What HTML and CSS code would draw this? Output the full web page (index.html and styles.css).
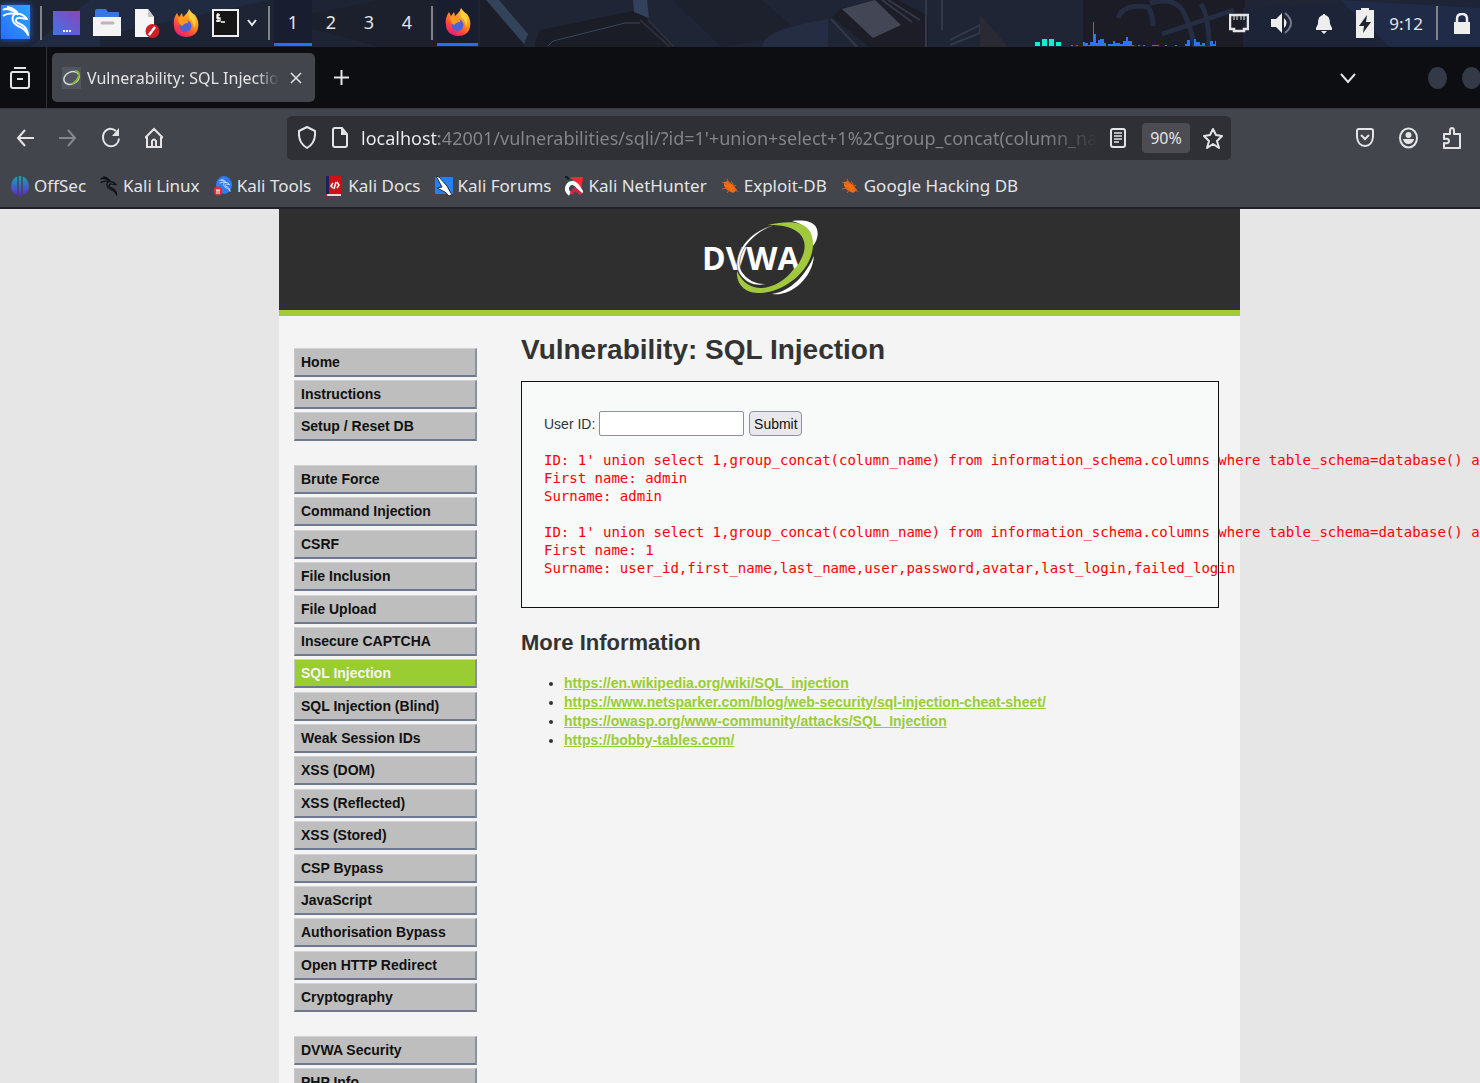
FILE: index.html
```html
<!DOCTYPE html>
<html lang="en">
<head>
<meta charset="utf-8">
<title>Vulnerability: SQL Injection</title>
<link rel="stylesheet" href="styles.css">
</head>
<body>
<svg class="defs" aria-hidden="true">
  <defs>
    <linearGradient id="flame" x1="0.8" y1="0" x2="0.2" y2="1"><stop offset="0" stop-color="#ffe14d"/><stop offset="0.45" stop-color="#ff8a1f"/><stop offset="0.75" stop-color="#ff3d45"/><stop offset="1" stop-color="#e3158a"/></linearGradient>
    <linearGradient id="violet" x1="0" y1="1" x2="1" y2="0"><stop offset="0" stop-color="#3f74e8"/><stop offset="1" stop-color="#8a46b8"/></linearGradient>
    <linearGradient id="kaliblue" x1="0" y1="1" x2="1" y2="0"><stop offset="0" stop-color="#2a6cff"/><stop offset="1" stop-color="#28a8ff"/></linearGradient>
    <linearGradient id="offsec" x1="0" y1="0" x2="0" y2="1"><stop offset="0" stop-color="#16a6b4"/><stop offset="1" stop-color="#6326cf"/></linearGradient>
    <symbol id="dragon" viewBox="0 0 28 30"><path d="M1 4C5 1 9 4 13 6l3 3M1 10c4-3 8-3 12-2M5 1c5 0 8 3 11 6M13 8c5-1 9 1 12 5l-6-1c-5-1-7 3-3 5 5 2 9 4 10 12-2-5-5-7-10-9-6-3-7-9-3-12z" fill="none" stroke="currentColor" stroke-width="2" stroke-linejoin="round"/></symbol>
    <symbol id="firefox" viewBox="0 0 26 30"><path d="M16 1c2 3 4 5 6 6 3 4 4 8 3 13-1 6-6 9-12 9S1 25 1 18C0 12 2 8 4 5l2 4 3-4 1 4c2-2 5-4 6-8z" fill="url(#flame)"/><circle cx="12.500" cy="18" r="6" fill="#4a63d6"/><path d="M5 10c3-1 5-1 7 1 2 1 4 2 3 4-3 0-4 1-6 3-2-1-4-4-4-8z" fill="#ff9a1f"/><path d="M17 4c5 4 7 10 4 16 0-4-2-7-4-9-2-3-1-5 0-7z" fill="#ffd23c"/></symbol>
    <symbol id="bug" viewBox="0 0 18 18"><path d="M3 5l4-1 5 4 4 5-4 3-6-3-3-4z" fill="#f26a12"/><path d="M1 5l4 2M6 2l2 5M1 12l6-1M6 16l3-4M10 4l3 5M15 8l-3 2M17 15l-4-3" stroke="#d95b10"/></symbol>
    <symbol id="nic" viewBox="0 0 20 20"><path d="M1 2h18v14h-4v2H5v-2H1z" fill="none" stroke="currentColor" stroke-width="2.500"/><path d="M5 3v4M8 3v4M12 3v4M15 3v4" stroke="currentColor"/></symbol>
  </defs>
</svg>

<header class="panel">
  <svg class="wallpaper" viewBox="0 0 1480 47" preserveAspectRatio="none" aria-hidden="true">
    <path d="M0 0h480v47H0z" fill="#1e2434"/><path d="M100 36 270 0H90L30 47h70z" fill="#202b42"/><path d="M280 20 380 0h90v47H380z" fill="#1c202d"/>
    <path d="M480 0h12l32 35v12h-44z" fill="#1b1d28"/><path d="M486 0h13l29 34-4 10z" fill="#33445a"/><path d="m535 42 5-12 98-20 8 8 28 29H535z" fill="#1a1c26"/><path d="m548 46 5-5 72-18 15 0" fill="none" stroke="#354862"/><path d="M633 0h14l2 18-15-6z" fill="#33425c"/><path d="m640 20 30 27M648 20l26 27" stroke="#2c2f3b" stroke-width="2"/>
    <path d="M672 0h90l30 26-30 14-40 7z" fill="#1d212e"/><path d="M762 47c2-13 20-20 66-28v28z" fill="#252d43"/>
    <path d="m832 17 8-8 38-9h20l30 16v31h-58z" fill="#1c1d27"/><path d="m842 9 33-9 26 25-28 13z" fill="#434755"/><path d="m831 19 26 28M882 0l30 22M888 0l32 20M950 40l30-15v8l-30 12M926 47V0M942 0v30" fill="none" stroke="#323848" stroke-width="2"/>
    <path d="m980 14 28 33h-28z" fill="#2a2a34"/><path d="M1083 0h162v47h-162z" fill="#1b1c26"/><path d="M1118 18q5-15 30-11c4 6 5 14 5 19M1150 3c20-5 30 0 35 12 6 14 8 22 10 32h14c0-20-3-35-8-43M1162 34l72-24" fill="none" stroke="#242d42" stroke-width="5"/><path d="M1243 8 1480 0v47h-237z" fill="#1d2438"/><path d="m1340 0 140 8v39h-90z" fill="#202b47"/>
  </svg>
  <button class="kali" aria-label="Applications"><svg viewBox="0 0 31 39"><path d="M1 5h29v34H1z" fill="url(#kaliblue)"/><use href="#dragon" x="2" y="5" width="28" height="32"/></svg></button>
  <span class="rule"></span>
  <div class="launchers">
    <button aria-label="Show desktop"><svg width="27" height="30" viewBox="0 0 27 30"><path d="M0 3h27v24H0z" fill="url(#violet)"/><path d="M10 23h2m1 0h2m1 0h2" stroke="#fff" stroke-width="2"/></svg></button>
    <button aria-label="Files"><svg width="28" height="30" viewBox="0 0 28 30"><path d="M2 3q0-2 2-2h9l2 3h11v8H2z" fill="#3578e5"/><path d="M0 9h28v19H0z" fill="#f4f4f4"/><path d="M9 15h11" stroke="#b8b8b8" stroke-width="3" stroke-linecap="round"/></svg></button>
    <button aria-label="Text editor"><svg width="26" height="30" viewBox="0 0 26 30"><path d="M1 1h13l6 8v20H1z" fill="#f6f6f6"/><path d="m14 1 6 8h-6z" fill="#c8c8c8"/><circle cx="18.500" cy="23" r="7" fill="#cf2026"/><path d="m15 27 6-8" stroke="#fff" stroke-width="2.500"/></svg></button>
    <button aria-label="Firefox"><svg width="26" height="30"><use href="#firefox"/></svg></button>
    <button aria-label="Terminal"><svg width="27" height="30" viewBox="0 0 27 30"><path d="M1 2h25v26H1z" fill="#161616" stroke="#eee" stroke-width="2"/><path d="M8 7H5v3h3v3H4M6 5v9M9 14h4" fill="none" stroke="#fff" stroke-width="1.300"/></svg></button>
  </div>
  <button class="more" aria-label="More launchers"><svg width="12" height="10" viewBox="0 0 12 10"><path d="m2 2 4 5 4-5" fill="none" stroke="#eee" stroke-width="2"/></svg></button>
  <span class="rule"></span>
  <nav class="spaces" aria-label="Workspaces"><button class="on">1</button><button>2</button><button>3</button><button>4</button></nav>
  <span class="rule"></span>
  <button class="task" aria-label="Firefox window"><svg width="26" height="30"><use href="#firefox"/></svg></button>
  <svg class="graph" width="182" height="30" viewBox="0 0 182 30" aria-label="System load"><path d="M0 26h5v4H0zM7 23h5v7H7zM14 23h5v7h-5zM21 26h5v4h-5z" fill="#00f5d4"/><path d="M36 30v-1h2v1M41 30v-1h2v1M48 30v-4h2v1h3v2h2v-3h3V6h1v12h2v9h2v-3h2v-1h4v4h2v3zM73 30v-2h5v-3h2v2h5v1h3v-3h3v-4h2v4h4v4h2v1zM103 30v-1h2v1M108 30v-1h2v1M117 30v-1h7v1M130 30v-1h2v1M140 30v-1h2v1M150 30v-2h2v-4h3v6zM159 30v-7h2v3h4v3h2v-2h3v3zM175 30v-5h3v3h2v-3h1v5z" fill="#2876ff"/></svg>
  <div class="tray">
    <button aria-label="Network"><svg width="20" height="20"><use href="#nic"/></svg></button>
    <button aria-label="Volume"><svg width="22" height="22" viewBox="0 0 22 22"><path d="M0 7h5l6-6v20l-6-6H0z" fill="#eee"/><path d="M13 6q5 5 0 10z" fill="#eee"/><path d="M14 1q12 10 0 20" fill="none" stroke="#777b86" stroke-width="2"/></svg></button>
    <button aria-label="Notifications"><svg width="18" height="21" viewBox="0 0 18 21"><path d="M8 1h2v1c4 1 5 4 5 9l2 4v2H1v-2l2-4c0-5 1-8 5-9zM6 18h6l-3 3z" fill="#eee"/></svg></button>
    <button aria-label="Battery"><svg width="20" height="30" viewBox="0 0 20 30"><path d="M6 0h8v2h5v28H1V2h5z" fill="#eee"/><path d="m12 7-8 11h5l-1 7 8-11h-5z" fill="#20242f"/></svg></button>
    <time>9:12</time>
  </div>
  <span class="rule"></span>
  <button class="lock" aria-label="Lock screen"><svg width="16" height="21" viewBox="0 0 16 21"><path d="M3 10V6q0-5 5-5t5 5v4" fill="none" stroke="#eee" stroke-width="2.500"/><path d="M0 9h16v12H0z" fill="#eee"/></svg></button>
</header>

<div class="tabs">
  <button class="view" aria-label="Firefox View"><svg width="20" height="22" viewBox="0 0 20 22"><path d="M4 1h12M2 5h16M7 12h6" stroke="currentColor" stroke-width="2"/><rect x="1" y="5" width="18" height="16" rx="2" fill="none" stroke="currentColor" stroke-width="2"/></svg></button>
  <div class="tab">
    <svg width="19" height="22" viewBox="0 0 19 22" aria-hidden="true"><path d="M0 0h19v22H0z" fill="#505560"/><ellipse cx="9.500" cy="11" rx="8" ry="6" transform="rotate(-25 9.500 11)" fill="none" stroke="#d4d9d0" stroke-width="1.500"/><path d="M13 4c7 0 4 9-3 13" fill="none" stroke="#83b42c" stroke-width="2"/></svg>
    <span class="title">Vulnerability: SQL Injection</span>
    <button aria-label="Close tab"><svg width="12" height="12" viewBox="0 0 12 12"><path d="m1 1 10 10M11 1 1 11" stroke="currentColor" stroke-width="1.500"/></svg></button>
  </div>
  <button class="plus" aria-label="New tab"><svg width="15" height="17" viewBox="0 0 15 17"><path d="M7.500 1v15M0 8.500h15" stroke="currentColor" stroke-width="2"/></svg></button>
  <button class="all" aria-label="List all tabs"><svg width="16" height="12" viewBox="0 0 16 12"><path d="m1 2 7 8 7-8" fill="none" stroke="currentColor" stroke-width="2"/></svg></button>
  <button class="win" aria-label="Minimise"></button><button class="win" aria-label="Maximise"></button>
</div>

<div class="toolbar">
  <div class="history">
    <button aria-label="Back"><svg width="18" height="18" viewBox="0 0 18 18"><path d="M18 9H2M9 1 2 9l7 8" fill="none" stroke="currentColor" stroke-width="2"/></svg></button>
    <button class="off" aria-label="Forward"><svg width="18" height="18" viewBox="0 0 18 18"><path d="M0 9h16M9 1l7 8-7 8" fill="none" stroke="currentColor" stroke-width="2"/></svg></button>
    <button aria-label="Reload"><svg width="18" height="21" viewBox="0 0 18 21"><path d="M14 4C8-1 1 3 1 10.500c0 11 15 12 16 1" fill="none" stroke="currentColor" stroke-width="2"/><path d="M17 1v8h-7z" fill="currentColor"/></svg></button>
    <button aria-label="Home"><svg width="18" height="21" viewBox="0 0 18 21"><path d="m0 11 9-9 9 9M2 10v10h14V10M7 20v-6q2-3 4 0v6" fill="none" stroke="currentColor" stroke-width="2"/></svg></button>
  </div>
  <div class="address">
    <svg width="18" height="23" viewBox="0 0 18 23" aria-hidden="true"><path d="m9 1 8 4q1 12-8 17Q0 17 1 5z" fill="none" stroke="currentColor" stroke-width="2" stroke-linejoin="round"/></svg>
    <svg width="16" height="21" viewBox="0 0 16 21" aria-hidden="true"><path d="M3 1h7l5 6v11q0 2-2 2H3q-2 0-2-2V3q0-2 2-2z" fill="none" stroke="currentColor" stroke-width="2"/><path d="M9 1v7h6z" fill="currentColor"/></svg>
    <input aria-label="Address" type="text" value="localhost:42001/vulnerabilities/sqli/?id=1'+union+select+1%2Cgroup_concat(column_name)+from">
    <button aria-label="Reader view"><svg width="16" height="20" viewBox="0 0 16 20"><rect x="1" y="1" width="14" height="18" rx="2" fill="none" stroke="currentColor" stroke-width="2"/><path d="M4 5h8M4 8h8M4 11h8M4 14h5" stroke="currentColor" stroke-width="1.500"/></svg></button>
    <button class="zoom">90%</button>
    <button aria-label="Bookmark"><svg width="20" height="22" viewBox="0 0 20 22"><path d="m10 2 3 6 6 1-5 5 2 7-6-4-6 4 2-7-5-5 6-1z" fill="none" stroke="currentColor" stroke-width="2" stroke-linejoin="round"/></svg></button>
  </div>
  <div class="extras">
    <button aria-label="Pocket"><svg width="18" height="19" viewBox="0 0 18 19"><path d="M3 1h12q2 0 2 2v6q-1 9-8 9T1 9V3q0-2 2-2z" fill="none" stroke="currentColor" stroke-width="2"/><path d="m5 7 4 4 4-4" fill="none" stroke="currentColor" stroke-width="2"/></svg></button>
    <button aria-label="Account"><svg width="19" height="22" viewBox="0 0 19 22"><ellipse cx="9.500" cy="11" rx="8.500" ry="9.500" fill="none" stroke="currentColor" stroke-width="2"/><circle cx="9.500" cy="8" r="3" fill="currentColor"/><path d="M4 12h11q-1 5-5.500 5T4 12z" fill="currentColor"/></svg></button>
    <button aria-label="Extensions"><svg width="18" height="22" viewBox="0 0 18 22"><path d="M1 7h6V4q0-3 2-3t2 3v3h6v14H1v-5q5 1 5-2t-5-2z" fill="none" stroke="currentColor" stroke-width="2" stroke-linejoin="round"/></svg></button>
  </div>
</div>

<nav class="bookmarks" aria-label="Bookmarks">
  <a href="#"><svg viewBox="0 0 18 20"><ellipse cx="9" cy="10" rx="9" ry="10" fill="url(#offsec)"/><path d="M7 0v20M11 0v20" stroke="#42454c" stroke-width="1.500"/></svg>OffSec</a>
  <a href="#" class="black"><svg><use href="#dragon"/></svg>Kali Linux</a>
  <a href="#"><svg viewBox="0 0 18 20"><ellipse cx="10" cy="9" rx="8" ry="9" fill="#2d7df5"/><use href="#dragon" x="5" y="3" width="12" height="13"/><circle cx="4" cy="15" r="4.500" fill="#e52d38"/><path d="M2 14h4M3 14v4M5 14v4" stroke="#fff"/></svg>Kali Tools</a>
  <a href="#"><svg viewBox="0 0 18 20"><path d="M1 0h15v20H1z" fill="#ce1116"/><path d="M1 0h3v18H1z" fill="#172457"/><path d="M2 19h14" stroke="#ddd" stroke-width="2"/><path d="m8 7-2 3 2 2M12 6l2 3-2 3M11 6 9 13" fill="none" stroke="#fff" stroke-width="1.500"/></svg>Kali Docs</a>
  <a href="#"><svg viewBox="0 0 18 20"><path d="M0 1h18v17H0z" fill="#2380f6"/><path d="m1 0 3 1 8 9 5 9-3 1-4-4-8-4 5-1z" fill="#fff" stroke="#252a35"/></svg>Kali Forums</a>
  <a href="#"><svg viewBox="0 0 18 20"><path d="M5 1h13l-2 14z" fill="#f52835"/><path d="M5 18C-1 14 3 6 8 7s5 5 9 10" fill="none" stroke="#fff" stroke-width="4"/><path d="m6 18 4-5 6 5" fill="none" stroke="#d72343" stroke-width="3"/><path d="m0 0 4 3" stroke="#161616" stroke-width="2"/></svg>Kali NetHunter</a>
  <a href="#"><svg><use href="#bug"/></svg>Exploit-DB</a>
  <a href="#"><svg><use href="#bug"/></svg>Google Hacking DB</a>
</nav>

<div class="page">
  <div class="site">
    <header class="banner">
      <svg width="116" height="80" viewBox="0 0 116 80" role="img" aria-label="DVWA"><text x="0" y="52" class="logo">DVWA</text><path d="M73 7C50 14 31 38 40 54q8 12 24 12-14 4-24-7C26 43 43 13 73 7z" fill="#fff" stroke="#2f2f2f" stroke-width="0.500"/><path d="M90 3c33-4 27 18 21 25-2-15-9-22-21-25zM112 38c-2 24-25 41-42 38 20-3 34-20 42-38z" fill="#fff"/><path d="M66 7c31-7 45 0 45 19 0 28-32 50-55 49-15 0-22-11-21-22 12 27 42 18 56-1l4-4c17-24 5-42-29-41z" fill="#a2c93e"/></svg>
    </header>
    <div class="columns">
      <nav class="menu" aria-label="DVWA">
        <ul><li><a href="#">Home</a></li><li><a href="#">Instructions</a></li><li><a href="#">Setup / Reset DB</a></li></ul>
        <ul class="labs"><li><a href="#">Brute Force</a></li><li><a href="#">Command Injection</a></li><li><a href="#">CSRF</a></li><li><a href="#">File Inclusion</a></li><li><a href="#">File Upload</a></li><li><a href="#">Insecure CAPTCHA</a></li><li><a href="#" class="current">SQL Injection</a></li><li><a href="#">SQL Injection (Blind)</a></li><li><a href="#">Weak Session IDs</a></li><li><a href="#">XSS (DOM)</a></li><li><a href="#">XSS (Reflected)</a></li><li><a href="#">XSS (Stored)</a></li><li><a href="#">CSP Bypass</a></li><li><a href="#">JavaScript</a></li><li><a href="#">Authorisation Bypass</a></li><li><a href="#">Open HTTP Redirect</a></li><li><a href="#">Cryptography</a></li></ul>
        <ul><li><a href="#">DVWA Security</a></li><li><a href="#">PHP Info</a></li></ul>
      </nav>
      <main>
        <h1>Vulnerability: SQL Injection</h1>
        <section class="vulnerable">
          <form><label for="uid">User ID:</label><input id="uid" type="text"><button type="button">Submit</button></form>
          <pre>ID: 1' union select 1,group_concat(column_name) from information_schema.columns where table_schema=database() and
First name: admin
Surname: admin</pre>
          <pre>ID: 1' union select 1,group_concat(column_name) from information_schema.columns where table_schema=database() and
First name: 1
Surname: user_id,first_name,last_name,user,password,avatar,last_login,failed_login</pre>
        </section>
        <h2>More Information</h2>
        <ul class="links"><li><a href="#">https://en.wikipedia.org/wiki/SQL_injection</a></li><li><a href="#">https://www.netsparker.com/blog/web-security/sql-injection-cheat-sheet/</a></li><li><a href="#">https://owasp.org/www-community/attacks/SQL_Injection</a></li><li><a href="#">https://bobby-tables.com/</a></li></ul>
      </main>
    </div>
  </div>
</div>
</body>
</html>
```
FILE: styles.css
```css
* { box-sizing: border-box; }
body { margin: 0; height: 100vh; display: flex; flex-direction: column; overflow: hidden; background: #e6e6e6; font-family: "Noto Sans", sans-serif; font-size: 17px; color: #e4e4e6; }
button { border: 0; padding: 0; background: none; color: inherit; font: inherit; display: flex; align-items: center; justify-content: center; flex: none; }
svg { display: block; flex: none; }
a { color: inherit; text-decoration: none; }
ul { list-style: none; margin: 0; padding: 0; }
.defs { position: absolute; width: 0; height: 0; }

/* Desktop panel */
.panel { position: relative; z-index: 0; display: flex; align-items: center; height: 47px; padding-bottom: 1px; flex: none; background: #1f2534; overflow: hidden; }
.wallpaper { position: absolute; z-index: -1; left: 0; top: 0; width: 100%; height: 100%; }
.kali svg { width: 31px; height: 39px; }
.kali { margin-right: 9px; color: #fff; height: 46px; align-items: flex-start; filter: drop-shadow(0 0 3px #1c62e8); }
.rule { width: 2px; height: 34px; background: #80838c; flex: none; }
.launchers { display: flex; gap: 13px; margin-left: 11px; }
.more { margin: 0 10px 0 7px; }
.spaces { display: flex; margin: 0 5px 0 4px; align-self: stretch; font-size: 18px; }
.spaces button { width: 38px; border-bottom: 3px solid transparent; }
.spaces .on { background: #181e30; border-color: #2a6df5; }
.task { width: 41px; margin: 0 0 0 4px; align-self: stretch; background: #181e30; border-bottom: 3px solid #2a6df5; }
.graph { margin-left: auto; align-self: flex-end; }
.tray { display: flex; align-items: center; gap: 22px; margin: 0 13px 0 12px; }
.tray time { margin-left: -8px; }
.lock { margin: 0 10px 0 16px; }

/* Tab strip */
.tabs { display: flex; align-items: center; height: 62px; flex: none; background: #0d0e12; border-bottom: 1px solid #38383d; overflow: hidden; }
.view { width: 47px; align-self: stretch; padding-right: 7px; border-right: 1px solid #303136; }
.tab { display: flex; align-items: center; width: 263px; height: 49px; margin: 0 19px 0 5px; padding: 0 13px 0 10px; border-radius: 5px; background: #42454c; }
.title { flex: 1; margin: 0 11px 0 6px; overflow: hidden; white-space: nowrap; font-size: 16px; mask-image: linear-gradient(to right, #000 88%, transparent); }
.all { margin: 0 72px 0 auto; }
.win { width: 19px; height: 22px; margin-right: 15px; border-radius: 50%; background: #343947; }
.win:last-child { margin-right: -1px; }

/* Navigation toolbar */
.toolbar { display: flex; align-items: center; height: 57px; flex: none; background: #42454c; padding: 0 19px 0 16px; }
.history { display: flex; gap: 25px; width: 271px; flex: none; }
.off { color: #85878c; }
.address { flex: 1; min-width: 0; display: flex; align-items: center; height: 44px; padding: 0 8px 0 11px; border-radius: 5px; background: #2f3035; gap: 16px; }
.address input { flex: 1; min-width: 0; border: 0; padding: 0; margin-right: -4px; margin-left: -3px; font: inherit; font-size: 18px; line-height: 28px; color: transparent; background: linear-gradient(to right, #f0f0f2 78px, #85868b 78px, #85868b 93%, transparent); background-clip: text; -webkit-background-clip: text; }
.zoom { width: 48px; height: 30px; border-radius: 4px; background: #4c4c52; font-size: 16px; }
.address button:last-child { margin-left: -3px; }
.extras { display: flex; align-items: center; gap: 25px; margin-left: 125px; }

/* Bookmarks bar */
.bookmarks { display: flex; align-items: center; gap: 14px; height: 43px; flex: none; padding: 0 11px 2px; background: #42454c; border-bottom: 2px solid #202126; white-space: nowrap; }
.bookmarks a { display: flex; align-items: center; gap: 5px; }
.bookmarks svg { width: 18px; height: 20px; }
.black svg { color: #101114; }

/* Site */
.page { flex: 1; min-height: 0; overflow: hidden; display: grid; grid-template-columns: 279fr 961fr 240fr; font-family: "Liberation Sans", Arial, sans-serif; font-size: 14px; color: #333; }
.site { grid-column: 2; min-width: 0; background: #f4f4f4; }
.banner { display: flex; justify-content: center; height: 107px; padding: 9px 0 0; background: #2f2f2f; border-bottom: 6px solid #a1cc33; }
.logo { font-family: "Open Sans", sans-serif; font-size: 32px; font-weight: bold; fill: #fff; }
.columns { display: grid; grid-template-columns: 183px minmax(0, 1fr); gap: 44px; padding: 16px 21px 0 15px; }
.menu { display: flex; flex-direction: column; gap: 24px; padding-top: 16px; }
.menu ul { display: flex; flex-direction: column; justify-content: space-between; gap: 3px; }
.menu .labs { min-height: 547px; }
.menu a { display: block; height: 29px; padding: 0 6px; line-height: 26px; font-weight: bold; color: #111; background: #bebebe; border: 1px solid; border-color: #d2d2d2 #8890a2 #6e7890 #c8c8c8; border-right-width: 2px; border-bottom-width: 2px; }
.menu .current { background: #9acd32; color: #f4f4f4; }
h1 { margin: 0 0 13px; font-size: 28px; line-height: 36px; }
.vulnerable { padding: 29px 22px 30px; border: 1px solid #111; background: #f8fafa; }
form { display: flex; align-items: center; height: 25px; }
form input { width: 145px; height: 25px; margin: 0 5px 0 4px; border: 1px solid #8f8f9d; border-radius: 2px; background: #fff; font: inherit; }
form button { width: 53px; height: 25px; border: 1px solid #8f8f9d; border-radius: 4px; background: #e9e9ed; color: #111; }
pre { margin: 15px 0 0; color: red; font-family: "DejaVu Sans Mono", monospace; font-size: 14px; line-height: 18px; }
pre + pre { margin-top: 18px; }
h2 { margin: 21px 0 17px; font-size: 22px; line-height: 28px; }
.links { list-style: disc; padding-left: 43px; line-height: 19px; }
.links a { font-weight: bold; color: #9acd32; text-decoration: underline; }
```
